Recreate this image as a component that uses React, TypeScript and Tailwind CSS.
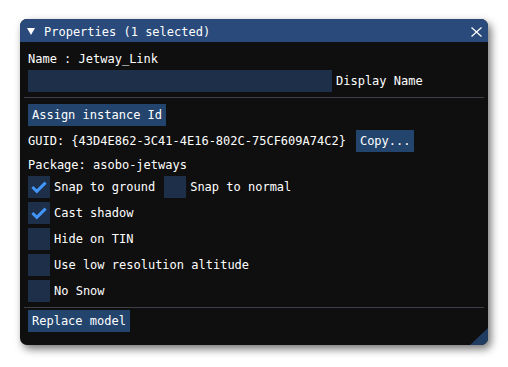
import React from 'react'

const mono = { fontFamily: '"DejaVu Sans Mono", "Liberation Mono", monospace' }

const CheckBox = ({ checked, label }: { checked?: boolean; label: string }) => (
  <div className="flex items-center gap-[4px] h-[22px]">
    <div className="w-[22px] h-[22px] bg-[#1d2f49] flex-none">
      {checked && (
        <svg width="22" height="22" viewBox="0 0 22 22">
          <polyline points="4.4,11 8.8,15.4 17.6,6.6" fill="none" stroke="#4296fa" strokeWidth="2.9" />
        </svg>
      )}
    </div>
    <span className="leading-[22px]">{label}</span>
  </div>
)

const Button = ({ children }: { children: React.ReactNode }) => (
  <div className="h-[22px] px-[4px] bg-[#23456d] leading-[22px] w-fit">{children}</div>
)

const Separator = ({ className }: { className: string }) => (
  <div className={`h-px bg-[#3f3f47] -mx-[4px] ${className}`} />
)

export default function App() {
  return (
    <div className="w-[508px] h-[367px] bg-white pt-[19px] pl-[20px]" style={mono}>
      <div className="relative w-[468px] h-[326px] bg-[#0f0f0f] rounded-[7px] overflow-hidden text-white text-[12px] shadow-[3px_4px_8px_rgba(0,0,0,0.55)]">
        {/* title bar */}
        <div className="h-[23px] bg-[#294a7a] flex items-center pl-[7px] pr-[6px] pt-[2px]">
          <svg width="8" height="7" viewBox="0 0 8 7" className="flex-none">
            <polygon points="0,0 8,0 4,7" fill="#ffffff" />
          </svg>
          <span className="ml-[9px] leading-[16px]">Properties (1 selected)</span>
          <svg width="11" height="10" viewBox="0 0 11 10" className="ml-auto flex-none">
            <path d="M0.5 0.5 L10.5 9.5 M10.5 0.5 L0.5 9.5" stroke="#ffffff" strokeWidth="1.2" />
          </svg>
        </div>

        <div className="flex flex-col px-[8px] pt-[9px]">
          <div className="h-[16px] leading-[16px]">Name : Jetway_Link</div>
          <div className="flex items-center gap-[4px] mt-[3px]">
            <div className="w-[304px] h-[22px] bg-[#1d2f49]" />
            <span>Display Name</span>
          </div>
          <Separator className="mt-[5px]" />
          <div className="mt-[6px]">
            <Button>Assign instance Id</Button>
          </div>
          <div className="flex items-center gap-[10px] mt-[4px]">
            <span>GUID: {'{43D4E862-3C41-4E16-802C-75CF609A74C2}'}</span>
            <Button>Copy...</Button>
          </div>
          <div className="h-[18px] leading-[18px] mt-[4px]">Package: asobo-jetways</div>
          <div className="flex flex-col gap-[4px] mt-[2px]">
            <div className="flex items-center gap-[9px]">
              <CheckBox checked label="Snap to ground" />
              <CheckBox label="Snap to normal" />
            </div>
            <CheckBox checked label="Cast shadow" />
            <CheckBox label="Hide on TIN" />
            <CheckBox label="Use low resolution altitude" />
            <CheckBox label="No Snow" />
          </div>
          <Separator className="mt-[5px]" />
          <div className="mt-[2px]">
            <Button>Replace model</Button>
          </div>
        </div>

        {/* resize grip */}
        <svg width="18" height="17" viewBox="0 0 18 17" className="absolute right-0 bottom-0">
          <polygon points="18,0 18,17 0,17" fill="#203c60" />
        </svg>
      </div>
    </div>
  )
}
